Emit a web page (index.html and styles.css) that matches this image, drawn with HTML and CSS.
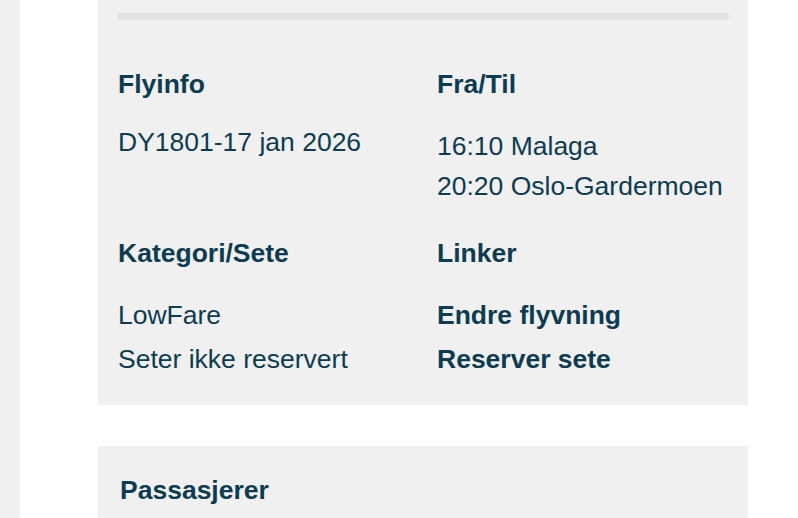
FILE: index.html
```html
<!DOCTYPE html>
<html lang="no">
<head>
<meta charset="utf-8">
<link rel="stylesheet" href="styles.css">
</head>
<body>
<div class="page">
  <div class="sidebar"></div>
  <main class="main">
    <section class="card flight">
      <div class="bar"></div>
      <div class="grid">
        <div class="cell row1">
          <h3 class="label">Flyinfo</h3>
          <div class="value first">DY1801-17 jan 2026</div>
        </div>
        <div class="cell row1">
          <h3 class="label">Fra/Til</h3>
          <div class="value route">
            <div>16:10 Malaga</div>
            <div>20:20 Oslo-Gardermoen</div>
          </div>
        </div>
        <div class="cell row2">
          <h3 class="label">Kategori/Sete</h3>
          <div class="value list">
            <div>LowFare</div>
            <div>Seter ikke reservert</div>
          </div>
        </div>
        <div class="cell row2">
          <h3 class="label">Linker</h3>
          <div class="value list links">
            <a href="#">Endre flyvning</a>
            <a href="#">Reserver sete</a>
          </div>
        </div>
      </div>
    </section>
    <section class="card passengers">
      <h3 class="label">Passasjerer</h3>
    </section>
  </main>
</div>
</body>
</html>
```

FILE: styles.css
```css
* { box-sizing: border-box; }
html, body {
  margin: 0;
  padding: 0;
  background: #ffffff;
}
body {
  font-family: "Liberation Sans", Arial, sans-serif;
  color: #0d3c51;
  font-size: 26.5px;
  line-height: 30px;
}
.page {
  display: flex;
  min-height: 518px;
  overflow: hidden;
}
.sidebar {
  width: 20px;
  flex: 0 0 20px;
  background: #f0f0f0;
}
.main {
  flex: 1;
  padding-left: 78px;
}
.card {
  width: 650px;
  background: #f0f0f0;
}
.flight {
  padding: 13px 20px 24px;
}
.bar {
  height: 7px;
  background: #e2e2e2;
  margin-right: -1px;
  border-radius: 0 3px 3px 0;
}
.grid {
  display: grid;
  grid-template-columns: 319px 1fr;
  margin-top: 49px;
}
.label {
  margin: 0;
  font-size: 26.5px;
  font-weight: bold;
  line-height: 30px;
}
.value.first {
  margin-top: 28px;
}
.value.route {
  margin-top: 27px;
  line-height: 40px;
}
.row2 {
  margin-top: 32px;
}
.value.list {
  margin-top: 25px;
  line-height: 44px;
}
.links a {
  display: block;
  color: inherit;
  text-decoration: none;
  font-weight: bold;
}
.passengers {
  margin-top: 41px;
  padding: 29px 22px 40px;
}
```
